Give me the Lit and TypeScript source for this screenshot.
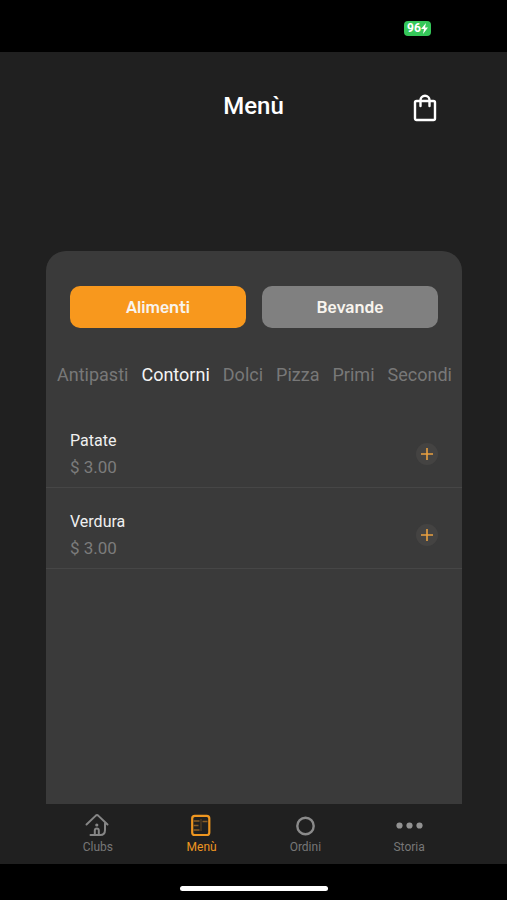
import { LitElement, html, css, svg } from "lit";
import { customElement, state } from "lit/decorators.js";
import { classMap } from "lit/directives/class-map.js";

const bagIcon = html`<svg class="bag-icon" viewBox="0 0 24 28" width="24" height="28" aria-hidden="true">
  <g fill="none" stroke="#fff" stroke-width="2.4" stroke-linecap="round" stroke-linejoin="round">
    <rect x="2" y="7" width="20" height="19" rx="1.5" />
    <path d="M7.5 12V6.2a4.5 4.5 0 0 1 9 0V12" />
  </g>
</svg>`;

const navIcons = {
  clubs: svg`<g fill="none" stroke="#868686" stroke-width="2" stroke-linecap="round" stroke-linejoin="round">
      <path d="M2.500 12.500 11.800 3.600q1.200-1 2.400 0L23.500 12.500" />
      <path d="M21 11.500v6.500c0 3.500-1.800 5-4.800 5H6.500" />
      <path d="M10.800 22.500v-4a2 2 0 0 1 4 0v4" />
    </g>
    <circle cx="12.800" cy="13" r="1.600" fill="#868686" />`,
  menu: svg`<rect x="4.200" y="3.800" width="17.100" height="19.200" rx="2.600" fill="none" stroke="#ee9620" stroke-width="2.200" />
    <g fill="none" stroke="#8a5d24" stroke-width="1.500">
      <path d="M5.500 9h6M5.500 13.500h5M5.500 18h6M14.500 9.500h5" />
      <path d="M13 7v12" stroke="#4d3a22" />
    </g>`,
  orders: svg`<circle cx="13.500" cy="14" r="8.200" fill="none" stroke="#8a8a8a" stroke-width="2.400" />`,
  history: svg`<g fill="#939393">
      <circle cx="3.500" cy="13.500" r="3.100" /><circle cx="13.500" cy="13.500" r="3.100" /><circle cx="23.500" cy="13.500" r="3.100" />
    </g>`,
};

@customElement("app-root")
export class AppRoot extends LitElement {
  @state() private group = "Alimenti";
  @state() private category = "Contorni";

  private groups = ["Alimenti", "Bevande"];
  private categories = ["Antipasti", "Contorni", "Dolci", "Pizza", "Primi", "Secondi"];
  private dishes = [
    { name: "Patate", price: "$ 3.00" },
    { name: "Verdura", price: "$ 3.00" },
  ];
  private nav = [
    { label: "Clubs", icon: navIcons.clubs, active: false },
    { label: "Menù", icon: navIcons.menu, active: true },
    { label: "Ordini", icon: navIcons.orders, active: false },
    { label: "Storia", icon: navIcons.history, active: false },
  ];

  static styles = css`
    :host {
      display: flex;
      flex-direction: column;
      min-height: 100vh;
      background: #202020;
      color: #fff;
      font-family: Roboto, "Liberation Sans", sans-serif;
    }
    * {
      box-sizing: border-box;
    }
    button {
      border: 0;
      padding: 0;
      margin: 0;
      background: none;
      color: inherit;
      font: inherit;
      cursor: pointer;
    }
    svg {
      display: block;
    }
    .status {
      display: flex;
      justify-content: flex-end;
      height: 52px;
      padding: 21px 76px 0 0;
      background: #000;
    }
    .battery {
      display: flex;
      align-items: center;
      justify-content: center;
      width: 27px;
      height: 15px;
      border-radius: 4px;
      background: #35c759;
      font-size: 12px;
      font-weight: 700;
      line-height: 15px;
    }
    .header {
      display: grid;
      grid-template-columns: 1fr auto 1fr;
      align-items: center;
      height: 108px;
      margin-bottom: 91px;
      padding: 0 70px;
    }
    .title {
      grid-column: 2;
      margin: 0;
      font-size: 24px;
      font-weight: 500;
      line-height: 28px;
    }
    .bag {
      justify-self: end;
      margin-top: 4px;
    }
    .panel {
      flex: 1;
      margin: 0 45px 0 46px;
      border-radius: 20px 20px 0 0;
      background: #3a3a3a;
    }
    .groups {
      display: flex;
      gap: 16px;
      padding: 35px 24px 0;
    }
    .group {
      flex: 1;
      height: 42px;
      border-radius: 10px;
      background: #808080;
      color: #f8f4ee;
      font-family: Rubik, Inter, Roboto, sans-serif;
      font-size: 16px;
      font-weight: 500;
    }
    .group.active {
      background: #f8981d;
    }
    .categories {
      display: flex;
      justify-content: space-between;
      padding: 35px 10px 0 11px;
    }
    .category {
      color: #787878;
      font-size: 18px;
      line-height: 24px;
    }
    .category.active {
      color: #f4f4f4;
    }
    .dishes {
      margin: 20px 0 0;
      padding: 0;
      list-style: none;
    }
    .dish {
      display: flex;
      align-items: center;
      justify-content: space-between;
      padding: 21px 24px 7px;
      border-bottom: 1px solid #464646;
    }
    .name,
    .price {
      line-height: 26px;
    }
    .name {
      color: #f0f0f0;
      font-size: 16px;
    }
    .price {
      color: #7c7c7c;
      font-size: 17px;
    }
    .add {
      display: grid;
      place-items: center;
      width: 22px;
      height: 22px;
      border-radius: 50%;
      background: #444342;
    }
    .nav {
      display: flex;
      height: 60px;
      padding: 8px 46px;
    }
    .link {
      display: flex;
      flex: 1;
      flex-direction: column;
      align-items: center;
      color: #777;
      font-size: 12px;
      line-height: 16px;
      text-decoration: none;
    }
    .link.active {
      color: #ee9620;
    }
    .home {
      display: flex;
      justify-content: center;
      height: 36px;
      padding-top: 22px;
      background: #000;
    }
    .indicator {
      width: 148px;
      height: 5px;
      border-radius: 3px;
      background: #fff;
    }
  `;

  render() {
    return html`
      <div class="status">
        <div class="battery">
          96<svg width="7" height="11" viewBox="0 0 7 11" aria-hidden="true"><path d="M5 0 0 6h3L2 11l5-6.500H4z" fill="#fff" /></svg>
        </div>
      </div>
      <header class="header">
        <h1 class="title">Menù</h1>
        <button class="bag" aria-label="Carrello">${bagIcon}</button>
      </header>
      <main class="panel">
        <div class="groups">
          ${this.groups.map(
            (g) => html`<button
              class=${classMap({ group: true, active: g === this.group })}
              @click=${() => (this.group = g)}
            >${g}</button>`
          )}
        </div>
        <div class="categories">
          ${this.categories.map(
            (c) => html`<button
              class=${classMap({ category: true, active: c === this.category })}
              @click=${() => (this.category = c)}
            >${c}</button>`
          )}
        </div>
        <ul class="dishes">
          ${this.dishes.map(
            (d) => html`<li class="dish">
              <div>
                <div class="name">${d.name}</div>
                <div class="price">${d.price}</div>
              </div>
              <button class="add" aria-label="Aggiungi ${d.name}">
                <svg width="12" height="12" viewBox="0 0 12 12" aria-hidden="true">
                  <path d="M6 0v12M0 6h12" stroke="#e8a040" stroke-width="1.600" />
                </svg>
              </button>
            </li>`
          )}
        </ul>
      </main>
      <nav class="nav">
        ${this.nav.map(
          (n) => html`<a href="#" class=${classMap({ link: true, active: n.active })}>
            <svg width="27" height="27" viewBox="0 0 27 27" aria-hidden="true">${n.icon}</svg>
            ${n.label}
          </a>`
        )}
      </nav>
      <div class="home"><div class="indicator"></div></div>
    `;
  }
}
